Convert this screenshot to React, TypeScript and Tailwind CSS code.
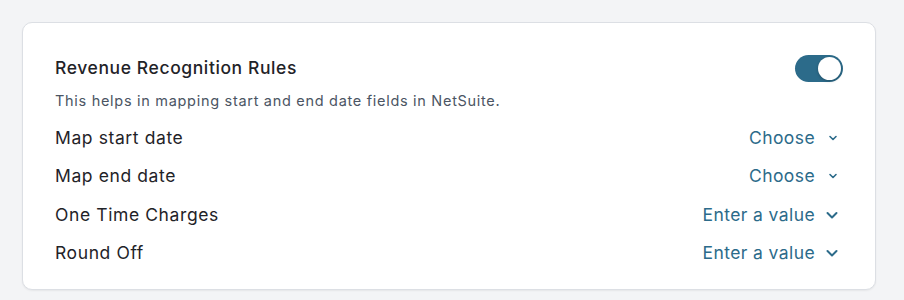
import { useState } from "react";

const rows = [
  { label: "Map start date", value: "Choose", small: true },
  { label: "Map end date", value: "Choose", small: true },
  { label: "One Time Charges", value: "Enter a value", small: false },
  { label: "Round Off", value: "Enter a value", small: false },
];

const Chevron = ({ small }: { small: boolean }) =>
  small ? (
    <svg width="10" height="10" viewBox="0 0 10 10" fill="none" className="ml-[13px]">
      <path d="M2 3.5 5 6.5 8 3.5" stroke="currentColor" strokeWidth="1.6" strokeLinecap="round" strokeLinejoin="round" />
    </svg>
  ) : (
    <svg width="12" height="12" viewBox="0 0 12 12" fill="none" className="ml-[11px]">
      <path d="M1.5 4 6 8.5 10.5 4" stroke="currentColor" strokeWidth="2" strokeLinecap="round" strokeLinejoin="round" />
    </svg>
  );

export default function App() {
  const [on, setOn] = useState(true);

  return (
    <div className="min-h-[300px] bg-[#f3f4f6] pt-[22px] pl-[22px] font-['Inter',sans-serif]">
      <div className="w-[854px] rounded-[10px] border border-[#dcdfe4] bg-white pl-[32px] pr-[32px] pt-[32px] pb-[17px] shadow-[0_1px_2px_rgba(0,0,0,0.06)]">
        <div className="flex h-[27px] items-center justify-between">
          <h2 className="text-[17.5px] font-medium tracking-[0.6px] text-[#1f2328]">Revenue Recognition Rules</h2>
          <button
            onClick={() => setOn(!on)}
            className={`relative h-[27px] w-[48px] rounded-full ${on ? "bg-[#2c6b8a]" : "bg-gray-300"}`}
          >
            <span
              className={`absolute top-[2px] h-[23px] w-[23px] rounded-full bg-white shadow-[0_1px_3px_rgba(0,0,0,0.25)] ${on ? "left-[23px]" : "left-[2px]"}`}
            />
          </button>
        </div>
        <p className="mt-[9px] text-[14.5px] leading-[20px] tracking-[0.7px] text-[#4b5563]">
          This helps in mapping start and end date fields in NetSuite.
        </p>
        <div className="mt-[8px] pr-[5px]">
          {rows.map((r) => (
            <div key={r.label} className="flex h-[38.3px] items-center justify-between">
              <span className="text-[17.5px] tracking-[0.6px] text-[#1f2328]">{r.label}</span>
              <span className="flex items-center text-[17.5px] tracking-[0.4px] text-[#2c6b8a]">
                {r.value}
                <Chevron small={r.small} />
              </span>
            </div>
          ))}
        </div>
      </div>
    </div>
  );
}
